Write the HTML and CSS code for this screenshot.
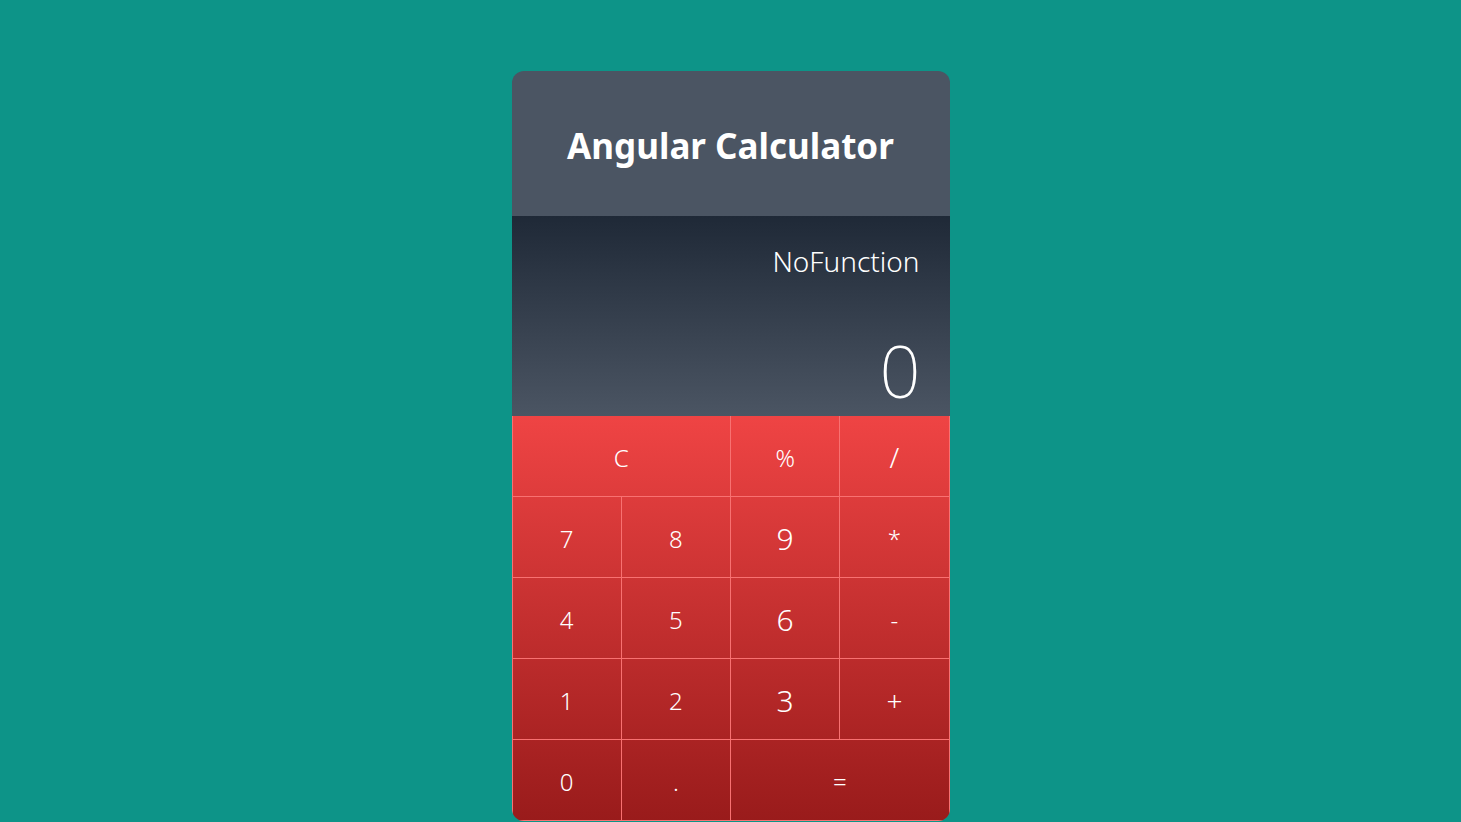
FILE: index.html
```html
<!DOCTYPE html>
<html lang="en">
<head>
<meta charset="utf-8">
<title>Angular Calculator</title>
<link rel="stylesheet" href="styles.css">
</head>
<body>
<main class="page">
  <section class="calc">
    <header class="calc-header">
      <h1 class="calc-title">Angular Calculator</h1>
    </header>
    <div class="display">
      <div class="display-func">NoFunction</div>
      <div class="display-value">0</div>
    </div>
    <div class="pad">
      <button class="key span2">C</button>
      <button class="key">%</button>
      <button class="key op">/</button>
      <button class="key">7</button>
      <button class="key">8</button>
      <button class="key big">9</button>
      <button class="key">*</button>
      <button class="key">4</button>
      <button class="key">5</button>
      <button class="key big">6</button>
      <button class="key">-</button>
      <button class="key">1</button>
      <button class="key">2</button>
      <button class="key big">3</button>
      <button class="key op">+</button>
      <button class="key">0</button>
      <button class="key">.</button>
      <button class="key span2">=</button>
    </div>
  </section>
</main>
</body>
</html>
```

FILE: styles.css
```css
* { box-sizing: border-box; }
html, body { margin: 0; padding: 0; }
body {
  background: #0d9488;
  font-family: "Noto Sans", "Open Sans", "Liberation Sans", sans-serif;
  height: 822px;
  overflow: hidden;
}
.page {
  display: flex;
  justify-content: center;
  padding-top: 71px;
}
.calc {
  width: 438px;
  border-radius: 12px;
  overflow: hidden;
  display: flex;
  flex-direction: column;
}
.calc-header {
  height: 145px;
  background: #4b5563;
  display: flex;
  align-items: center;
  justify-content: center;
}
.calc-title {
  margin: 0;
  color: #fff;
  font-size: 35px;
  font-weight: 700;
  padding-top: 3px;
}
.display {
  height: 200px;
  background: linear-gradient(to bottom, #1f2937, #4b5563);
  color: #fff;
  display: flex;
  flex-direction: column;
  align-items: flex-end;
  padding: 25px 30px 0 0;
}
.display-func {
  font-size: 28px;
  font-weight: 300;
  line-height: 40px;
}
.display-value {
  font-size: 72px;
  font-weight: 200;
  line-height: 1;
  margin-top: 53px;
  margin-right: -1px;
}
.pad {
  display: grid;
  grid-template-columns: repeat(4, 1fr);
  grid-auto-rows: 81px;
  border-left: 1px solid #f87171;
  background: linear-gradient(to bottom, #ef4444, #991b1b);
}
.key {
  border: 0;
  border-right: 1px solid #f87171;
  border-bottom: 1px solid #f87171;
  margin: 0;
  padding: 2px 0 0 0;
  color: #fff;
  font-family: inherit;
  font-size: 24px;
  font-weight: 300;
  background: transparent;
}
.key.big { font-size: 30px; }
.key.op { font-size: 28px; }
.span2 { grid-column: span 2; }
```
